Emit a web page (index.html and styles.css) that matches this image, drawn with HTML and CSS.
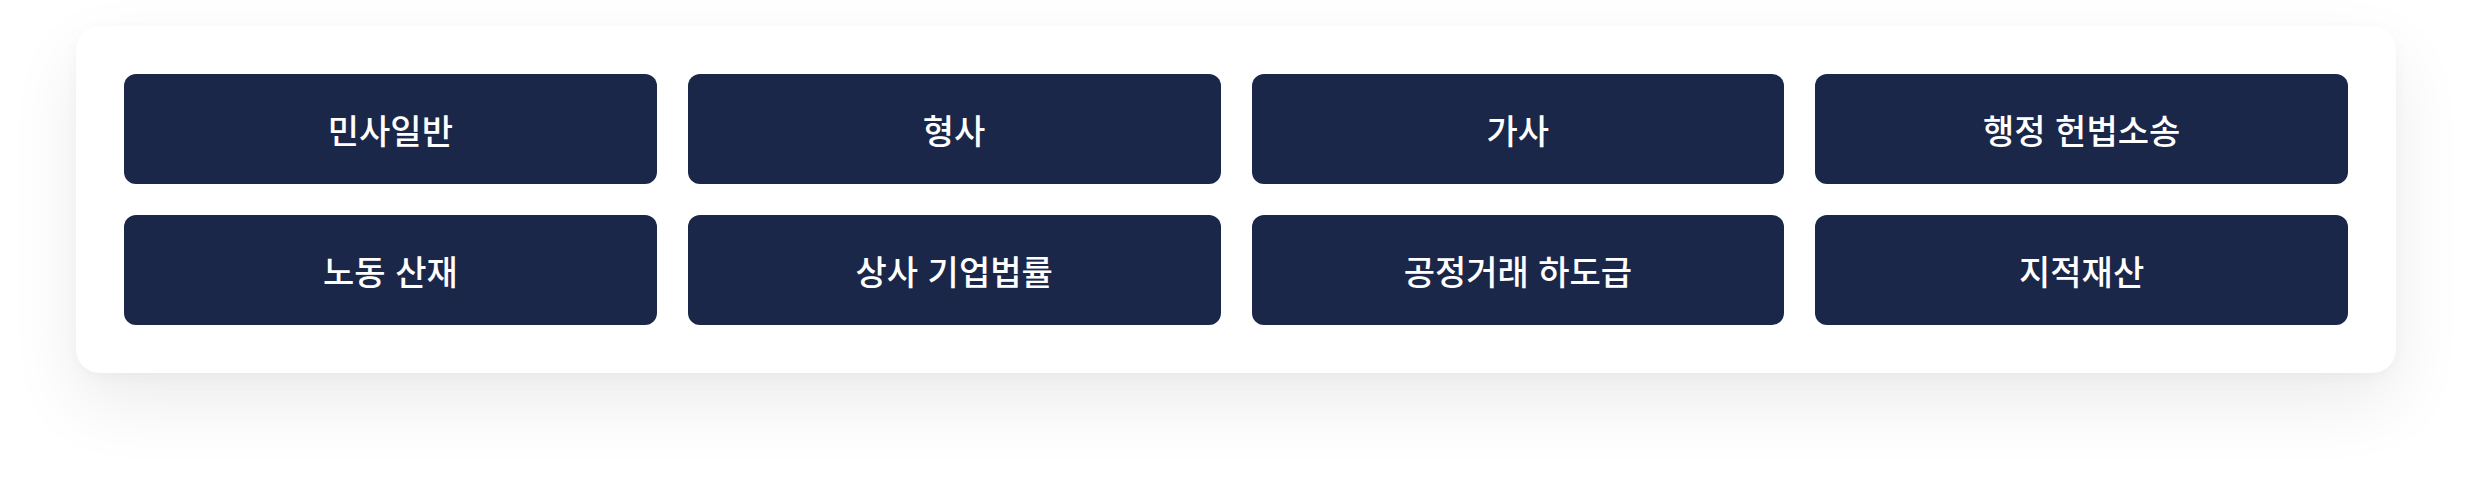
FILE: index.html
```html
<!DOCTYPE html>
<html lang="ko">
<head>
    <meta charset="UTF-8">
    <meta name="viewport" content="width=device-width, initial-scale=1.0">
    <title>분야별 상담</title>
    <link rel="stylesheet" href="styles.css">
</head>
<body>
    <div class="wrap">
        <div class="category-card">
            <div class="category-grid">
                <button class="category-btn">민사일반</button>
                <button class="category-btn">형사</button>
                <button class="category-btn">가사</button>
                <button class="category-btn">행정 헌법소송</button>
                <button class="category-btn">노동 산재</button>
                <button class="category-btn">상사 기업법률</button>
                <button class="category-btn">공정거래 하도급</button>
                <button class="category-btn">지적재산</button>
            </div>
        </div>
    </div>
</body>
</html>
```

FILE: styles.css
```css
/* 기본 */
body {
    margin: 0;
    background-color: #fff;
    font-family: "Noto Sans CJK KR", "Noto Sans", sans-serif;
}

.wrap {
    padding: 26px 76px 128px;
}

/* 분야 카드 */
.category-card {
    background-color: #fff;
    border-radius: 24px;
    padding: 48px;
    box-shadow: 0 30px 70px rgba(0, 0, 0, 0.08), 0 4px 14px rgba(0, 0, 0, 0.03);
}

.category-grid {
    display: grid;
    grid-template-columns: repeat(4, 1fr);
    gap: 31px;
}

.category-btn {
    height: 110px;
    background-color: #1b2749;
    color: #fff;
    border: none;
    border-radius: 12px;
    font-family: "Noto Sans CJK KR", "Noto Sans", sans-serif;
    font-size: 34px;
    font-weight: 500;
    cursor: pointer;
}
```
